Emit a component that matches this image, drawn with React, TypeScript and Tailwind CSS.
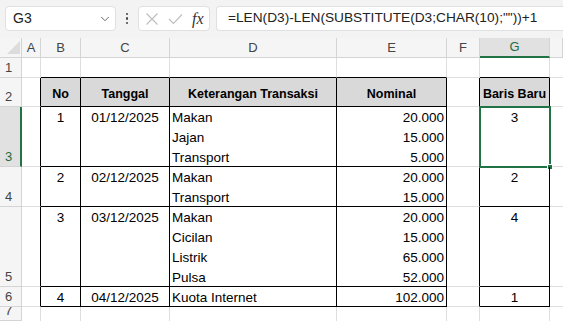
import { ChevronDown } from "lucide-react";

const cols = ["A", "B", "C", "D", "E", "F", "G", ""];
const grid =
  "grid grid-cols-[22px_19px_40px_89px_167px_110px_33px_70px_1fr] grid-rows-[20px_20px_29px_60px_40px_80px_20px_14px]";
const cellFont = "font-['Liberation_Sans',Arial,sans-serif] text-[13.5px] leading-[20px] text-black pt-[1px]";

interface RowData {
  no: string;
  tanggal: string;
  items: string[];
  nominal: string[];
  baris: string;
  selected?: boolean;
}

const rows: RowData[] = [
  { no: "1", tanggal: "01/12/2025", items: ["Makan", "Jajan", "Transport"], nominal: ["20.000", "15.000", "5.000"], baris: "3", selected: true },
  { no: "2", tanggal: "02/12/2025", items: ["Makan", "Transport"], nominal: ["20.000", "15.000"], baris: "2" },
  { no: "3", tanggal: "03/12/2025", items: ["Makan", "Cicilan", "Listrik", "Pulsa"], nominal: ["20.000", "15.000", "65.000", "52.000"], baris: "4" },
  { no: "4", tanggal: "04/12/2025", items: ["Kuota Internet"], nominal: ["102.000"], baris: "1" },
];

function RowHead({ n, selected }: { n: string; selected?: boolean }) {
  return (
    <div
      className={`flex items-end pl-[5px] text-[13px] leading-[18px] font-['Liberation_Sans',Arial,sans-serif] border-b border-[#d4d4d4] overflow-hidden ${
        selected
          ? "bg-[#e1e1e1] text-[#1e6b41] border-r-2 border-r-[#217346]"
          : "bg-[#f5f5f5] text-[#444] border-r border-r-[#d4d4d4]"
      }`}
    >
      {n}
    </div>
  );
}

function FormulaBar() {
  return (
    <div className="h-[38px] bg-[#f3f3f3] flex items-start pt-[6px] pl-[5px] gap-[6px] font-['Liberation_Sans',Arial,sans-serif]">
      <div className="w-[111px] h-[25px] bg-white border border-[#e0e0e0] rounded-[4px] flex items-center justify-between pl-[7px] pr-[3px] text-[14px] text-[#222]">
        <span>G3</span>
        <ChevronDown size={14} strokeWidth={1.5} className="text-[#555]" />
      </div>
      <div className="flex flex-col gap-[2px] justify-center h-[25px] w-[10px] items-center">
        <span className="w-[2.5px] h-[2.5px] rounded-full bg-[#444]" />
        <span className="w-[2.5px] h-[2.5px] rounded-full bg-[#444]" />
        <span className="w-[2.5px] h-[2.5px] rounded-full bg-[#444]" />
      </div>
      <div className="w-[72px] h-[25px] bg-white border border-[#e0e0e0] rounded-[4px] flex items-center gap-[9px] pl-[6px]">
        <svg width="14" height="14" viewBox="0 0 14 14" fill="none" stroke="#bdbdbd" strokeWidth="1.1">
          <path d="M1.5 1.5 L12.5 12.5 M12.5 1.5 L1.5 12.5" />
        </svg>
        <svg width="15" height="12" viewBox="0 0 15 12" fill="none" stroke="#bdbdbd" strokeWidth="1.1">
          <path d="M1 6 L5.5 10.5 L14 1.5" />
        </svg>
        <span className="font-['Liberation_Serif',serif] italic text-[16px] text-[#333] leading-none">fx</span>
      </div>
      <div className="flex-1 h-[25px] bg-white border border-[#e0e0e0] border-r-0 rounded-l-[4px] flex items-center pl-[11px] text-[13.7px] text-[#222] whitespace-nowrap overflow-hidden">
        =LEN(D3)-LEN(SUBSTITUTE(D3;CHAR(10);""))+1
      </div>
    </div>
  );
}

export default function App() {
  const g = "border-r border-b border-[#dedede]";
  const top = "border-r border-[#dedede] border-b border-b-black";
  const head =
    "bg-[#d9d9d9] border-r border-b border-black flex items-end justify-center pb-[2px] font-['Liberation_Sans',Arial,sans-serif] font-bold text-[12.5px] leading-[20px] text-black whitespace-nowrap";
  return (
    <div className="w-[563px] h-[321px] overflow-hidden bg-white">
      <FormulaBar />
      <div className={grid}>
        {/* column headers */}
        <div className="bg-[#f5f5f5] border-r border-b border-[#d4d4d4] relative">
          <svg className="absolute left-[7px] top-[3px]" width="13" height="13" viewBox="0 0 13 13">
            <path d="M13 0 L13 13 L0 13 Z" fill="#dcdcdc" />
          </svg>
        </div>
        {cols.map((c, i) => (
          <div
            key={i}
            className={`flex items-center justify-center text-[13px] font-['Liberation_Sans',Arial,sans-serif] border-r border-[#d4d4d4] ${
              c === "G"
                ? "bg-[#e1e1e1] text-[#1e6b41] border-b-2 border-b-[#217346]"
                : "bg-[#f5f5f5] text-[#444] border-b border-b-[#d4d4d4]"
            }`}
          >
            {c}
          </div>
        ))}

        {/* row 1 */}
        <RowHead n="1" />
        <div className={g} />
        <div className={top} />
        <div className={top} />
        <div className={top} />
        <div className={top} />
        <div className={g} />
        <div className={top} />
        <div className="border-b border-[#dedede]" />

        {/* row 2 header */}
        <RowHead n="2" />
        <div className="border-b border-[#dedede] border-r border-r-black" />
        {["No", "Tanggal", "Keterangan Transaksi", "Nominal"].map((t) => (
          <div key={t} className={head}>
            {t}
          </div>
        ))}
        <div className="border-b border-[#dedede] border-r border-r-black" />
        <div className={head}>Baris Baru</div>
        <div className="border-b border-[#dedede]" />

        {/* data rows */}
        {rows.map((r, i) => (
          <div key={r.no} className="contents">
            <RowHead n={String(i + 3)} selected={r.selected} />
            <div className="border-b border-[#dedede] border-r border-r-black" />
            <div className={`${cellFont} border-r border-b border-black text-center`}>{r.no}</div>
            <div className={`${cellFont} border-r border-b border-black text-center`}>{r.tanggal}</div>
            <div className={`${cellFont} border-r border-b border-black pl-[2px]`}>
              {r.items.map((t) => (
                <div key={t}>{t}</div>
              ))}
            </div>
            <div className={`${cellFont} border-r border-b border-black text-right pr-[2px]`}>
              {r.nominal.map((t, k) => (
                <div key={k}>{t}</div>
              ))}
            </div>
            <div className="border-b border-[#dedede] border-r border-r-black" />
            <div className={`${cellFont} border-r border-b border-black text-center relative`}>
              {r.baris}
              {r.selected && (
                <div className="absolute -left-[1px] -top-[1px] w-[72px] h-[62px] border-2 border-[#217346]">
                  <div className="absolute -right-[4px] -bottom-[4px] w-[6px] h-[6px] bg-[#217346] border border-white" />
                </div>
              )}
            </div>
            <div className="border-b border-[#dedede]" />
          </div>
        ))}

        {/* row 7 */}
        <RowHead n="7" />
        {cols.map((c, i) => (
          <div key={i} className={c ? "border-r border-[#dedede]" : ""} />
        ))}
      </div>
    </div>
  );
}
